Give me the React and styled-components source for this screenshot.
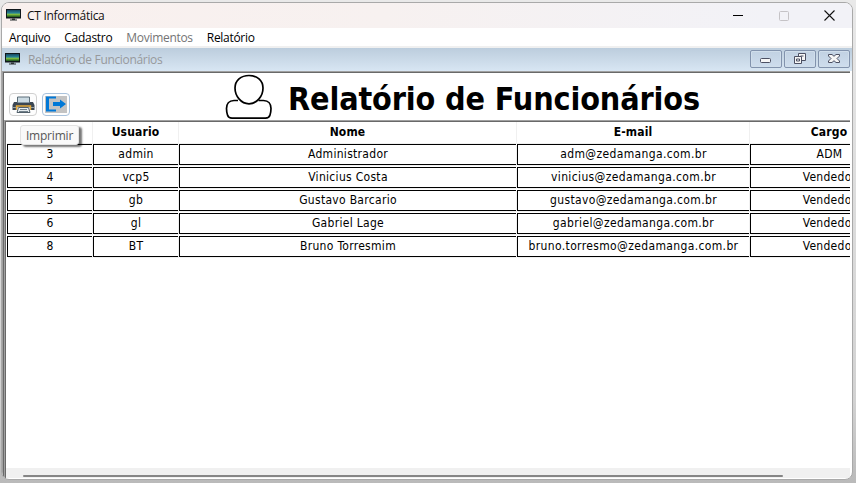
import React from "react";
import styled, { createGlobalStyle } from "styled-components";

const Global = createGlobalStyle`
  * { box-sizing: border-box; }
  body { margin: 0; background: #e8e8e8; overflow: hidden; }
`;
const segoe = `"Open Sans", "Noto Sans", sans-serif`;
const tahoma = `"DejaVu Sans Condensed", "DejaVu Sans", sans-serif`;

const Desktop = styled.div`
  width: 856px; height: 483px; padding: 2px 3px 3px 1px; overflow: hidden;
  background: linear-gradient(#e9e9e9 0 2px, #e4e4e4 60px, #d2d2d2 400px, #bababa);
`;
const AppWindow = styled.div`
  height: 478px; border: 1px solid #a9a9a9; border-radius: 8px; overflow: hidden;
  background: #fff; display: flex; flex-direction: column;
`;
const TitleBar = styled.header`
  height: 25px; flex: none; display: flex; align-items: center; padding-left: 4px;
  background: linear-gradient(90deg, #f9f0ee, #f7f1f0 45%, #f2f2f7 90%);
`;
const WindowTitle = styled.h1`
  margin: 0 auto 0 6px; font: 400 12px/20px ${segoe}; letter-spacing: -0.3px; color: #111;
`;
const Caption = styled.div`
  width: 137px; display: flex; justify-content: space-between; padding: 0 17px 0 18px; align-items: center;
`;
const MenuBar = styled.nav`
  height: 18px; flex: none; display: flex; gap: 14px; padding-left: 7px;
  font: 400 12px/20px ${segoe}; letter-spacing: -0.3px;
`;
const MenuItem = styled.span`
  color: ${(p) => (p.$disabled ? "#747474" : "#000")};
`;
const ChildFrame = styled.section`
  flex: 1; min-height: 0; border-top: 2px solid #f0f0f0; display: flex; flex-direction: column;
`;
const ChildTitleBar = styled.header`
  height: 23px; flex: none; display: flex; align-items: center; padding: 0 2px 1px 3px;
  background: linear-gradient(#bccddd, #d8e6f3);
`;
const ChildTitle = styled.h2`
  margin: 2px auto 0 8px; font: 400 12px/20px ${segoe}; letter-spacing: -0.33px; color: #97999c;
`;
const ChildButtons = styled.div`
  display: flex; gap: 2px;
`;
const ChildButton = styled.button`
  width: 32px; height: 18px; padding: 0; border: 1px solid #8293ad; border-radius: 2px;
  background: linear-gradient(#c1d1e2, #cedded); box-shadow: inset 0 0 0 1px #d0deeb;
  display: grid; place-items: center;
`;
const ChildBody = styled.div`
  flex: 1; min-height: 0; display: flex; flex-direction: column; margin: 0 2px 1px 0;
  border: solid #a0a0a0; border-width: 1px 0 0 1px; box-shadow: inset 1px 1px #696969;
  padding: 1px 0 0 1px;
`;
const Toolbar = styled.div`
  height: 47px; flex: none; display: flex; padding: 0 0 0 5px; position: relative;
`;
const ToolButton = styled.button`
  width: 28px; height: 23px; margin: 20px 5px 0 0; padding: 0; border-radius: 4px;
  border: 1px solid ${(p) => (p.$focused ? "#a9c2dc" : "#d0d0d0")}; background: #fdfdfd;
  display: grid; place-items: center;
`;
const Heading = styled.div`
  display: flex; margin-left: 150px; padding-top: 1px; align-items: flex-start;
`;
const HeadingText = styled.h3`
  margin: 5px 0 0 15px; font: 700 32px/40px ${tahoma}; letter-spacing: -0.13px; white-space: nowrap; color: #000;
`;
const Tooltip = styled.div`
  position: absolute; left: 16px; top: 52px; width: 59px; height: 20px; z-index: 2;
  border: 1px solid #e2e2e2; border-radius: 3px; background: #f9f9f9; box-shadow: 3px 2px 2px #0008;
  font: 400 12px/19px ${segoe}; letter-spacing: -0.2px; text-align: center; color: #575757;
`;
const ReportGrid = styled.div`
  flex: 1; min-height: 0; overflow: hidden; display: flex; flex-direction: column;
  border: solid #a0a0a0; border-width: 1px 0 0 1px; box-shadow: inset 1px 1px #696969;
  padding: 1px 0 0 1px;
`;
const Row = styled.div`
  display: grid; grid-template-columns: 85px 85px 337px 232px 158px; column-gap: 1px;
  height: 21px; margin: 0 0 ${(p) => (p.$head ? 1 : 2)}px 1px; flex: none;
`;
const HeadCell = styled.div`
  font: 700 12px/21px ${tahoma}; letter-spacing: 0.15px; text-align: center;
  border-bottom: 1px solid #f0f0f0; box-shadow: 1px 0 #f0f0f0;
`;
const Cell = styled.div`
  border: solid #000; border-width: 1px 0 1px 1px; font: 400 12px/18px ${tahoma};
  letter-spacing: ${(p) => (p.$email ? 0.36 : 0.3)}px; box-shadow: 1px 1px #f0f0f0;
  text-align: center; color: #000; white-space: nowrap;
`;
const ScrollTrack = styled.div`
  height: 10px; flex: none; margin-top: auto; background: #f0f0f0; padding: 7px 67px 0 17px;
`;
const ScrollThumb = styled.div`
  height: 2px; background: #858585; border-radius: 1px;
`;

const MonitorIcon = () => (
  <svg width="15" height="13" viewBox="0 0 15 13">
    <defs>
      <linearGradient id="screen" x1="0" y1="0" x2="0" y2="1">
        <stop offset="0" stopColor="#164763" /><stop offset=".45" stopColor="#2a8798" />
        <stop offset=".6" stopColor="#86c443" /><stop offset="1" stopColor="#18511b" />
      </linearGradient>
    </defs>
    <path d="M0 0h15v9.500H0z" fill="#10181c" />
    <path d="M1 1h13v7H1z" fill="url(#screen)" />
    <path d="M6 9.500h3v1h2v1H4v-1h2z" fill="#2d3335" />
  </svg>
);
const PrinterIcon = () => (
  <svg width="23" height="18" viewBox="0 0 23 18">
    <path d="M5.500 1h12v7h-12z" fill="#ccdbe3" stroke="#5b6d78" />
    <path d="M2 6h3v1h13V6h3l1.500 3v5h-4l-1-3h-12l-1 3h-4V9z" fill="#3c4752" />
    <path d="M6 6h11v1H6z" fill="#8799a5" />
    <path d="M1 11.500h3M19 11.500h3" stroke="#94a2aa" />
    <path d="M4.500 14v-4h14v4" fill="none" stroke="#e5aa3a" strokeWidth="1.400" />
    <path d="M6.500 11.500h10l1.500 5H5z" fill="#e7edf0" stroke="#52606b" />
    <path d="M8 13.500h7M7 15.500h9" stroke="#71808a" />
  </svg>
);
const ExitIcon = () => (
  <svg width="22" height="17" viewBox="0 0 22 17">
    <path d="M0 0h22v17H0z" fill="#c3c3c3" />
    <path d="M11 0.500H1v15h10v-2H4v-11h7z" fill="#0078d7" />
    <path d="M8 6h7V3.500l6 4.500-6 4.500V10H8z" fill="#0078d7" />
  </svg>
);
const PersonIcon = () => (
  <svg width="48" height="46" viewBox="0 0 48 46" fill="#fff" stroke="#000" strokeWidth="1.700">
    <path d="M13 26.500H9c-5 0-7.500 3.500-7.500 8 0 3 .4 4.500 1 6.500.6 2 2 3.200 4.500 3.200h33.500c2.500 0 3.900-1.200 4.500-3.200.6-2 1-3.500 1-6.500 0-4.500-2.500-8-7.500-8h-5" />
    <path d="M24 1.500c8 0 14 5 14 12.500C38 22 32 29.800 24 29.800S10 22 10 14C10 6.500 16 1.500 24 1.500z" />
  </svg>
);
const CaptionIcons = () => (
  <>
    <svg width="10" height="11"><path d="M0 5.500h10" stroke="#000" /></svg>
    <svg width="10" height="10"><rect x=".5" y=".5" width="9" height="9" rx="1" fill="none" stroke="#c5c3c6" /></svg>
    <svg width="11" height="11"><path d="M.5.5l10 10M10.500.5l-10 10" stroke="#111" strokeWidth="1.100" /></svg>
  </>
);
const ChildGlyph = ({ kind }) => (
  <svg width="12" height="12" fill="#f6f6f6" stroke="#4c5063">
    {kind === "min" && <rect x=".5" y="5.500" width="10" height="4" rx="1" />}
    {kind === "restore" && (
      <>
        <path d="M4.500.5h7v7h-7z" /><path d="M6.500 3h3" />
        <path d="M.5 3.500h7v7h-7z" /><path d="M2.500 6h3v2h-3z" />
      </>
    )}
    {kind === "close" && (
      <path d="M.5 1.500h3.500L6 3.300 8 1.500h3.500V3L9 5.500 11.500 8v1.500H8L6 7.700 4 9.500H.5V8L3 5.500.5 3z" />
    )}
  </svg>
);

const menus = ["Arquivo", "Cadastro", "Movimentos", "Relatório"];
const heads = ["", "Usuario", "Nome", "E-mail", "Cargo"];
const rows = [
  ["3", "admin", "Administrador", "adm@zedamanga.com.br", "ADM"],
  ["4", "vcp5", "Vinicius Costa", "vinicius@zedamanga.com.br", "Vendedor"],
  ["5", "gb", "Gustavo Barcario", "gustavo@zedamanga.com.br", "Vendedor"],
  ["6", "gl", "Gabriel Lage", "gabriel@zedamanga.com.br", "Vendedor"],
  ["8", "BT", "Bruno Torresmim", "bruno.torresmo@zedamanga.com.br", "Vendedor"],
];

export default function App() {
  return (
    <Desktop>
      <Global />
      <AppWindow>
        <TitleBar>
          <MonitorIcon />
          <WindowTitle>CT Informática</WindowTitle>
          <Caption><CaptionIcons /></Caption>
        </TitleBar>
        <MenuBar>
          {menus.map((m) => <MenuItem key={m} $disabled={m === "Movimentos"}>{m}</MenuItem>)}
        </MenuBar>
        <ChildFrame>
          <ChildTitleBar>
            <MonitorIcon />
            <ChildTitle>Relatório de Funcionários</ChildTitle>
            <ChildButtons>
              {["min", "restore", "close"].map((k) => <ChildButton key={k}><ChildGlyph kind={k} /></ChildButton>)}
            </ChildButtons>
          </ChildTitleBar>
          <ChildBody>
            <Toolbar>
              <ToolButton><PrinterIcon /></ToolButton>
              <ToolButton $focused><ExitIcon /></ToolButton>
              <Heading>
                <PersonIcon />
                <HeadingText>Relatório de Funcionários</HeadingText>
              </Heading>
              <Tooltip>Imprimir</Tooltip>
            </Toolbar>
            <ReportGrid>
              <Row $head>{heads.map((h, i) => <HeadCell key={i}>{h}</HeadCell>)}</Row>
              {rows.map((r) => (
                <Row key={r[0]}>{r.map((c, i) => <Cell key={i} $email={i === 3}>{c}</Cell>)}</Row>
              ))}
              <ScrollTrack><ScrollThumb /></ScrollTrack>
            </ReportGrid>
          </ChildBody>
        </ChildFrame>
      </AppWindow>
    </Desktop>
  );
}
